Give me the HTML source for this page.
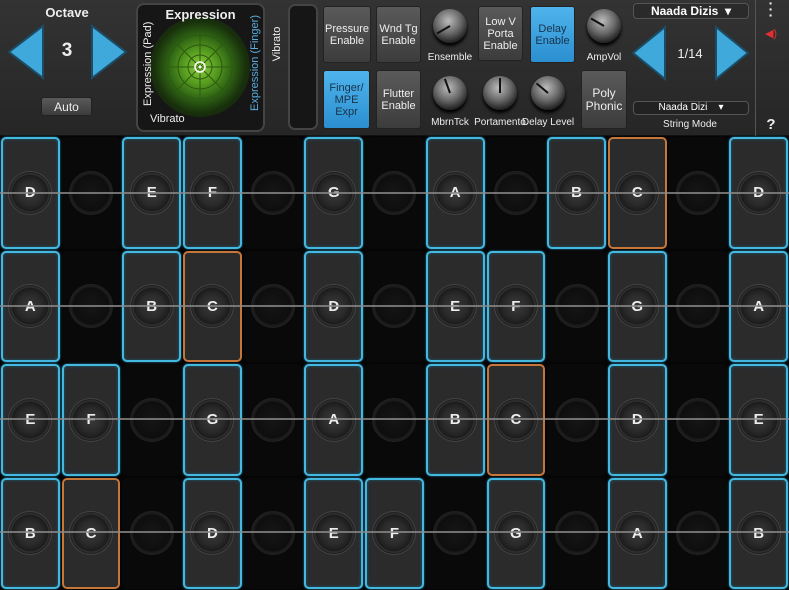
<!DOCTYPE html><html><head><meta charset="utf-8"><style>
*{box-sizing:border-box;margin:0;padding:0}
body{width:789px;height:590px;background:#050505;font-family:"Liberation Sans",sans-serif;overflow:hidden;position:relative;color:#fff}
.top{position:absolute;left:0;top:0;width:789px;height:136px;background:linear-gradient(#333,#262626);border-bottom:1px solid #111}
.a{position:absolute}
.lbl{position:absolute;font-size:10px;color:#eee;text-align:center;white-space:nowrap}
.btn{position:absolute;background:linear-gradient(#5a5a5a,#3c3c3c);border-radius:3px;border:1px solid #222;font-size:11px;color:#eee;display:flex;align-items:center;justify-content:center;text-align:center;line-height:12px}
.blue{background:linear-gradient(#4fb4ec,#2b8fd0);color:#17324a}
.knob{position:absolute;width:34px;height:34px;border-radius:50%;background:radial-gradient(circle at 45% 35%,#bbb,#666 45%,#222 75%,#000);box-shadow:0 3px 3px #000}
.knob i{position:absolute;left:16px;top:2px;width:2px;height:15px;background:#111;transform-origin:1px 15px}
.grid{position:absolute;left:0;top:136px;width:789px;height:454px;display:grid;grid-template-columns:repeat(13,1fr);grid-template-rows:repeat(4,1fr)}
.c{position:relative;padding:1px}
.c>div{width:100%;height:100%;border-radius:5px;position:relative}
.p>div{background:#2b2b2c;border:2px solid #45b8e0;box-shadow:inset 0 0 3px #1b5a70,0 0 2px #2a7fa0}
.o>div{background:#2b2b2c;border:2px solid #c7763a}
.e>div{background:#090909}
.r{position:absolute;left:50%;top:50%;width:44px;height:44px;margin:-22px 0 0 -22px;border-radius:50%;background:radial-gradient(circle,#3a3a3a 0,#2a2a2a 40%,#1c1c1c 60%,#333 64%,#1c1c1c 70%,#2a2a2a 100%);border:1px solid #444;font-size:15px;font-weight:bold;display:flex;align-items:center;justify-content:center;color:#eee}
.e .r{background:radial-gradient(circle,#161616,#0e0e0e 60%,#1d1d1d 66%,#0c0c0c);border-color:#222}
.line{position:absolute;left:0;width:789px;height:2px;background:#8a8a8a;opacity:.8}
</style></head><body>
<div class="top">
<div class="lbl" style="left:30px;top:5px;width:74px;font-size:13px;font-weight:bold">Octave</div>
<svg class="a" style="left:6px;top:24px" width="122" height="56"><polygon points="37,2 37,54 3,28" fill="#3fa9dc" stroke="#1b4d66" stroke-width="2"/><polygon points="86,2 86,54 120,28" fill="#3fa9dc" stroke="#1b4d66" stroke-width="2"/></svg>
<div class="lbl" style="left:50px;top:40px;width:34px;font-size:19px;font-weight:bold">3</div>
<div class="btn" style="left:41px;top:97px;width:51px;height:19px;font-size:12px">Auto</div>
<div class="a" style="left:136px;top:3px;width:129px;height:129px;border:2px solid #444;border-radius:8px;background:#161616;overflow:hidden">
<div class="a" style="left:12px;top:12px;width:100px;height:100px;border-radius:50%;background:radial-gradient(circle,#8fd040 0,#5aa020 22%,#2f6414 45%,#18300c 65%,#161616 90%)"></div>
<svg class="a" style="left:22px;top:22px" width="80" height="80"><g fill="none" stroke="#2c5a12" stroke-width="1"><circle cx="40" cy="40" r="12"/><circle cx="40" cy="40" r="22"/><circle cx="40" cy="40" r="32"/><line x1="40" y1="8" x2="40" y2="72"/><line x1="8" y1="40" x2="72" y2="40"/><line x1="17" y1="17" x2="63" y2="63"/><line x1="63" y1="17" x2="17" y2="63"/></g><circle cx="40" cy="40" r="5" fill="none" stroke="#fff" stroke-width="1.5"/><circle cx="40" cy="40" r="1.5" fill="#fff"/></svg>
<div class="lbl" style="left:0;top:2px;width:125px;font-size:13px;font-weight:bold">Expression</div>
<div class="lbl" style="left:12px;top:108px;font-size:11px">Vibrato</div>
<div class="lbl" style="left:-30px;top:55px;font-size:11px;transform:rotate(-90deg);width:80px">Expression (Pad)</div>
<div class="lbl" style="left:72px;top:55px;font-size:11px;color:#5aaede;transform:rotate(-90deg);width:90px">Expression (Finger)</div>
</div>
<div class="lbl" style="left:252px;top:38px;width:50px;transform:rotate(-90deg);font-size:11px">Vibrato</div>
<div class="a" style="left:288px;top:4px;width:30px;height:126px;border:2px solid #444;border-radius:7px;background:#161616"></div>
<div class="btn" style="left:323px;top:6px;width:48px;height:57px">Pressure<br>Enable</div>
<div class="btn" style="left:376px;top:6px;width:45px;height:57px">Wnd Tg<br>Enable</div>
<div class="btn blue" style="left:323px;top:70px;width:47px;height:59px">Finger/<br>MPE<br>Expr</div>
<div class="btn" style="left:376px;top:70px;width:45px;height:59px">Flutter<br>Enable</div>
<div class="btn" style="left:478px;top:6px;width:45px;height:55px">Low V<br>Porta<br>Enable</div>
<div class="btn blue" style="left:530px;top:6px;width:45px;height:57px">Delay<br>Enable</div>
<div class="btn" style="left:581px;top:70px;width:46px;height:59px;font-size:12px;line-height:13px">Poly<br>Phonic</div>
<div class="knob" style="left:433px;top:9px"><i style="transform:rotate(-120deg)"></i></div>
<div class="knob" style="left:587px;top:9px"><i style="transform:rotate(-60deg)"></i></div>
<div class="knob" style="left:433px;top:76px"><i style="transform:rotate(-20deg)"></i></div>
<div class="knob" style="left:483px;top:76px"><i style="transform:rotate(0deg)"></i></div>
<div class="knob" style="left:531px;top:76px"><i style="transform:rotate(-50deg)"></i></div>
<div class="lbl" style="left:420px;top:52px;width:60px">Ensemble</div>
<div class="lbl" style="left:574px;top:52px;width:60px">AmpVol</div>
<div class="lbl" style="left:420px;top:117px;width:60px">MbrnTck</div>
<div class="lbl" style="left:470px;top:117px;width:60px">Portamento</div>
<div class="lbl" style="left:518px;top:117px;width:60px">Delay Level</div>
<div class="a" style="left:633px;top:3px;width:116px;height:16px;border:1px solid #555;border-radius:4px;font-size:12px;font-weight:bold;text-align:center;line-height:14px;background:#2a2a2a">Naada Dizis &nbsp;▾</div>
<svg class="a" style="left:631px;top:25px" width="120" height="56"><polygon points="34,2 34,54 2,28" fill="#3fa9dc" stroke="#1b4d66" stroke-width="2"/><polygon points="85,2 85,54 117,28" fill="#3fa9dc" stroke="#1b4d66" stroke-width="2"/></svg>
<div class="lbl" style="left:668px;top:46px;width:44px;font-size:13px">1/14</div>
<div class="a" style="left:633px;top:101px;width:116px;height:14px;border:1px solid #555;border-radius:4px;font-size:10px;text-align:center;line-height:12px;background:#222">Naada Dizi &nbsp;&nbsp;&nbsp;▾</div>
<div class="lbl" style="left:650px;top:119px;width:80px">String Mode</div>
<div class="a" style="left:755px;top:0;width:1px;height:136px;background:#555"></div>
<div class="lbl" style="left:764px;top:0;width:14px;font-size:14px;font-weight:bold;line-height:6px">·<br>·<br>·</div>
<div class="lbl" style="left:764px;top:27px;width:14px;font-size:11px;color:#e03030">◀)</div>
<div class="lbl" style="left:764px;top:116px;width:14px;font-size:15px;font-weight:bold">?</div>
</div>
<div class="grid">
<div class="c p"><div><div class="r">D</div></div></div><div class="c e"><div><div class="r"></div></div></div><div class="c p"><div><div class="r">E</div></div></div><div class="c p"><div><div class="r">F</div></div></div><div class="c e"><div><div class="r"></div></div></div><div class="c p"><div><div class="r">G</div></div></div><div class="c e"><div><div class="r"></div></div></div><div class="c p"><div><div class="r">A</div></div></div><div class="c e"><div><div class="r"></div></div></div><div class="c p"><div><div class="r">B</div></div></div><div class="c o"><div><div class="r">C</div></div></div><div class="c e"><div><div class="r"></div></div></div><div class="c p"><div><div class="r">D</div></div></div>
<div class="c p"><div><div class="r">A</div></div></div><div class="c e"><div><div class="r"></div></div></div><div class="c p"><div><div class="r">B</div></div></div><div class="c o"><div><div class="r">C</div></div></div><div class="c e"><div><div class="r"></div></div></div><div class="c p"><div><div class="r">D</div></div></div><div class="c e"><div><div class="r"></div></div></div><div class="c p"><div><div class="r">E</div></div></div><div class="c p"><div><div class="r">F</div></div></div><div class="c e"><div><div class="r"></div></div></div><div class="c p"><div><div class="r">G</div></div></div><div class="c e"><div><div class="r"></div></div></div><div class="c p"><div><div class="r">A</div></div></div>
<div class="c p"><div><div class="r">E</div></div></div><div class="c p"><div><div class="r">F</div></div></div><div class="c e"><div><div class="r"></div></div></div><div class="c p"><div><div class="r">G</div></div></div><div class="c e"><div><div class="r"></div></div></div><div class="c p"><div><div class="r">A</div></div></div><div class="c e"><div><div class="r"></div></div></div><div class="c p"><div><div class="r">B</div></div></div><div class="c o"><div><div class="r">C</div></div></div><div class="c e"><div><div class="r"></div></div></div><div class="c p"><div><div class="r">D</div></div></div><div class="c e"><div><div class="r"></div></div></div><div class="c p"><div><div class="r">E</div></div></div>
<div class="c p"><div><div class="r">B</div></div></div><div class="c o"><div><div class="r">C</div></div></div><div class="c e"><div><div class="r"></div></div></div><div class="c p"><div><div class="r">D</div></div></div><div class="c e"><div><div class="r"></div></div></div><div class="c p"><div><div class="r">E</div></div></div><div class="c p"><div><div class="r">F</div></div></div><div class="c e"><div><div class="r"></div></div></div><div class="c p"><div><div class="r">G</div></div></div><div class="c e"><div><div class="r"></div></div></div><div class="c p"><div><div class="r">A</div></div></div><div class="c e"><div><div class="r"></div></div></div><div class="c p"><div><div class="r">B</div></div></div>
</div>
<div class="line" style="top:192px"></div><div class="line" style="top:305px"></div><div class="line" style="top:418px"></div><div class="line" style="top:531px"></div>
</body></html>
